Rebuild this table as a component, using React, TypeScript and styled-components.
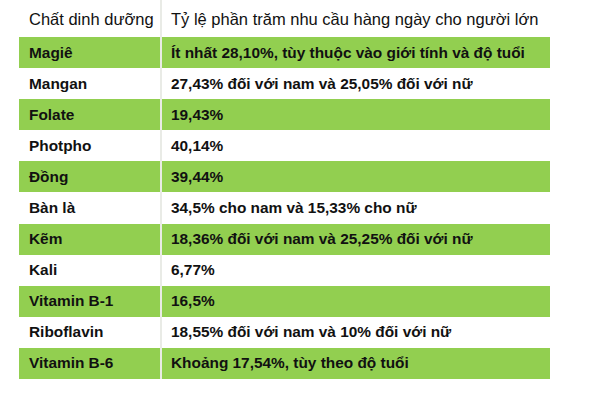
import React from 'react';
import styled, { createGlobalStyle } from 'styled-components';

interface Nutrient {
  name: string;
  value: string;
}

const rows: Nutrient[] = [
  { name: 'Magiê', value: 'Ít nhất 28,10%, tùy thuộc vào giới tính và độ tuổi' },
  { name: 'Mangan', value: '27,43% đối với nam và 25,05% đối với nữ' },
  { name: 'Folate', value: '19,43%' },
  { name: 'Photpho', value: '40,14%' },
  { name: 'Đồng', value: '39,44%' },
  { name: 'Bàn là', value: '34,5% cho nam và 15,33% cho nữ' },
  { name: 'Kẽm', value: '18,36% đối với nam và 25,25% đối với nữ' },
  { name: 'Kali', value: '6,77%' },
  { name: 'Vitamin B-1', value: '16,5%' },
  { name: 'Riboflavin', value: '18,55% đối với nam và 10% đối với nữ' },
  { name: 'Vitamin B-6', value: 'Khoảng 17,54%, tùy theo độ tuổi' },
];

const GlobalStyle = createGlobalStyle`
  body {
    margin: 0;
    background: #ffffff;
    font-family: "Liberation Sans", Arial, sans-serif;
  }
`;

const Table = styled.div`
  width: 531px;
  margin-left: 19px;
  display: flex;
  flex-direction: column;
`;

const Row = styled.div<{ $green?: boolean; $header?: boolean }>`
  display: grid;
  grid-template-columns: 143px 1fr;
  height: ${p => (p.$header ? '37px' : '31.1px')};
  background: ${p => (p.$green ? '#92cf50' : '#ffffff')};
  align-items: center;
`;

const Cell = styled.div<{ $header?: boolean; $first?: boolean }>`
  height: 100%;
  display: flex;
  align-items: center;
  padding-left: ${p => (p.$first ? '10px' : '9px')};
  padding-top: ${p => (p.$header ? '1px' : '0')};
  box-sizing: border-box;
  border-right: ${p => (p.$first ? '2px solid #e9ebe6' : 'none')};
  font-size: ${p => (p.$header ? '16.5px' : '15.4px')};
  font-weight: ${p => (p.$header ? 400 : 700)};
  color: ${p => (p.$header ? '#111111' : '#111111')};
  white-space: nowrap;
`;

export default function App() {
  return (
    <>
      <GlobalStyle />
      <Table>
        <Row $header>
          <Cell $header $first>Chất dinh dưỡng</Cell>
          <Cell $header>Tỷ lệ phần trăm nhu cầu hàng ngày cho người lớn</Cell>
        </Row>
        {rows.map((r, i) => (
          <Row key={r.name} $green={i % 2 === 0}>
            <Cell $first>{r.name}</Cell>
            <Cell>{r.value}</Cell>
          </Row>
        ))}
      </Table>
    </>
  );
}
